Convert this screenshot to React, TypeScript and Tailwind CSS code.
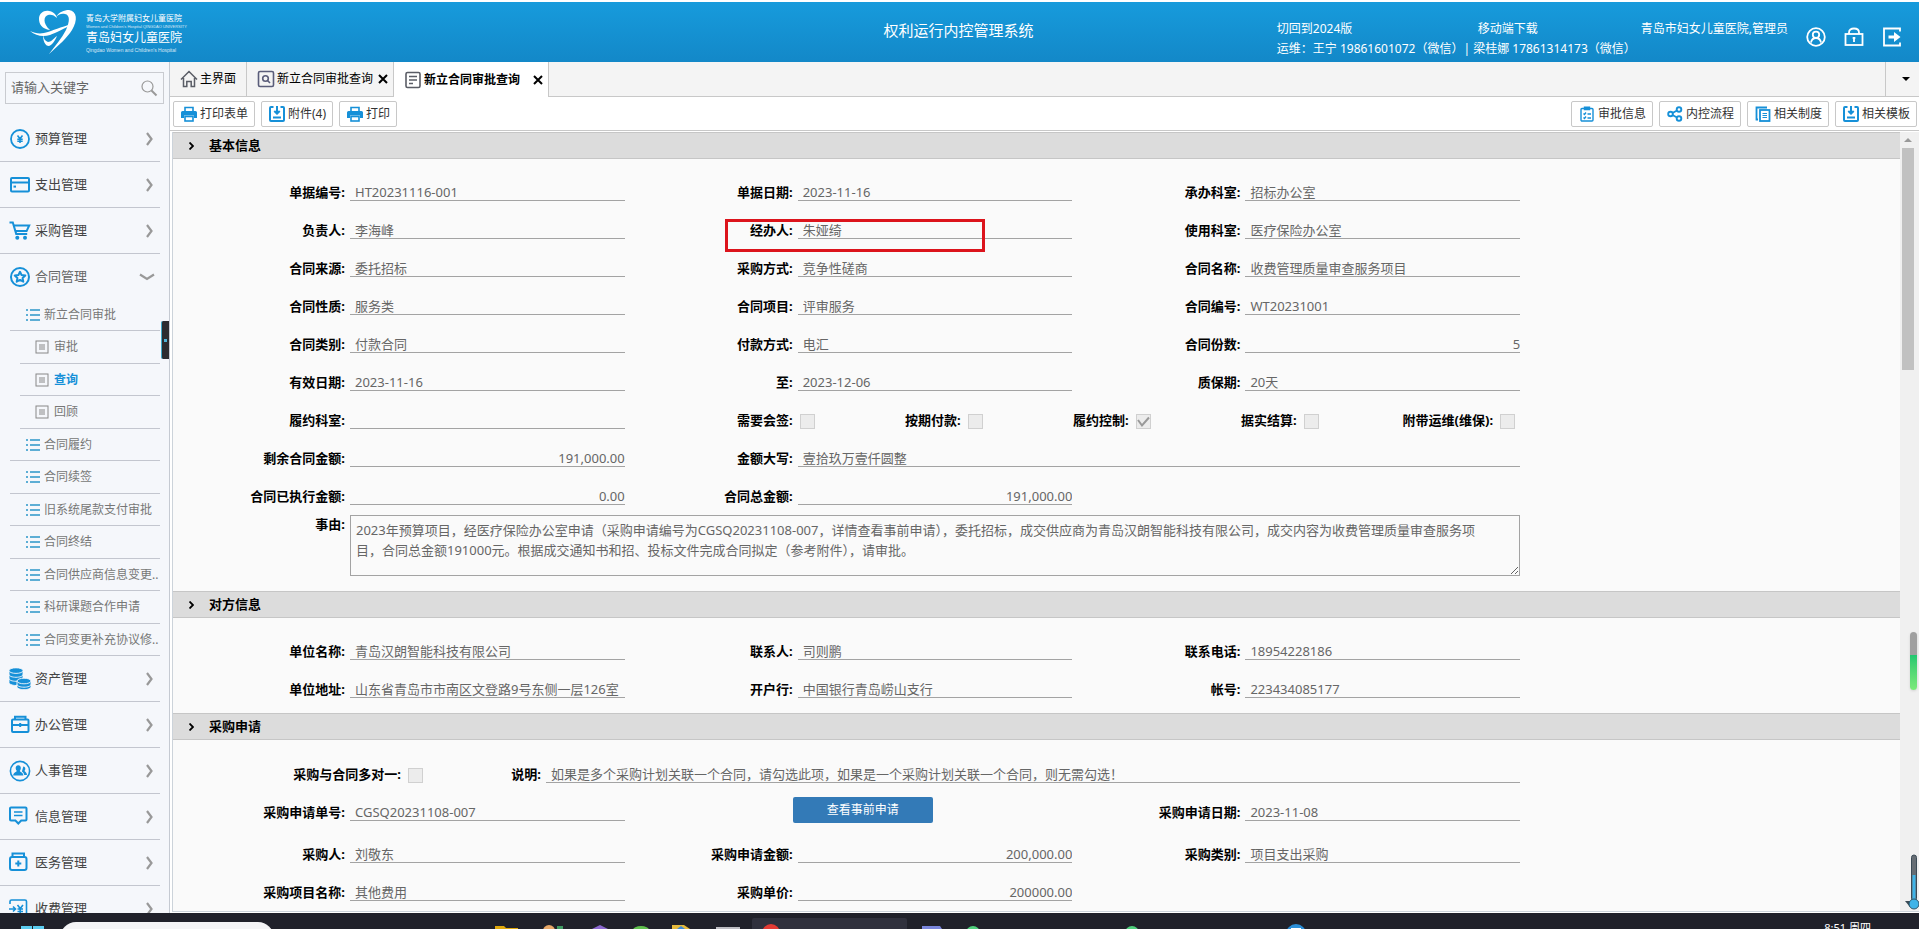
import { useState, type ReactNode } from 'react';

/* ---------- icons ---------- */

const BLUE = '#1690d8';

const menuIcons: Record<string, ReactNode> = {
  budget: (
    <g fill="none" stroke={BLUE} strokeWidth="1.8">
      <circle cx="11" cy="11" r="9" />
      <path d="M8.5 7.5l2.5 3.2 2.5-3.2M11 10.5v4.5M8.3 11.2h5.4M8.3 13.3h5.4" strokeWidth="1.6" />
    </g>
  ),
  expense: (
    <g fill="none" stroke={BLUE} strokeWidth="2">
      <rect x="2" y="4" width="18" height="13.5" rx="1" />
      <path d="M2 8.5h18" />
      <path d="M4.5 12.6h2.5" />
    </g>
  ),
  purchase: (
    <g fill="none" stroke={BLUE} strokeWidth="2">
      <path d="M0.5 2.5h3.3l3.4 11.4h11" />
      <path d="M4.8 5.5h15.4l-2.6 5.6H6.4" />
      <circle cx="8.3" cy="17.8" r="2" fill={BLUE} stroke="none" />
      <circle cx="16" cy="17.8" r="2" fill={BLUE} stroke="none" />
    </g>
  ),
  contract: (
    <g fill="none" stroke={BLUE} strokeWidth="2">
      <circle cx="11" cy="11" r="9" />
      <path d="M11 5.8l1.6 3.3 3.7.5-2.7 2.5.7 3.6-3.3-1.8-3.3 1.8.7-3.6-2.7-2.5 3.7-.5z" strokeLinejoin="round" />
    </g>
  ),
  asset: (
    <g fill={BLUE} stroke="#f5f7fb" strokeWidth="0.9">
      <path d="M0 2.5v12c0 1.6 3.2 3 7 3s7-1.4 7-3v-12z" />
      <ellipse cx="7" cy="2.6" rx="7" ry="2.8" />
      <path d="M0 6.5c0 1.6 3.2 2.8 7 2.8s7-1.2 7-2.8M0 10.5c0 1.6 3.2 2.8 7 2.8s7-1.2 7-2.8" fill="none" />
      <path d="M8 13.2v5.6c0 1.6 3.2 2.9 7 2.9s7-1.3 7-2.9v-5.6z" />
      <ellipse cx="15" cy="13" rx="7" ry="2.8" />
      <path d="M8 16.4c0 1.6 3.2 2.8 7 2.8s7-1.2 7-2.8" fill="none" />
    </g>
  ),
  office: (
    <g fill="none" stroke={BLUE} strokeWidth="2">
      <rect x="3" y="5.5" width="16.5" height="12.5" rx="1" />
      <path d="M6 5.5V2.8h10.5v2.7M3 11h16.5M11.2 9v4" />
    </g>
  ),
  staff: (
    <g>
      <circle cx="11" cy="11" r="9.6" fill="none" stroke={BLUE} strokeWidth="1.6" />
      <path d="M9.2 5.2c1.9 0 2.8 1.3 2.6 3.2-.1 1.2-.7 1.9-1 2.4.2 1.6 3.6 1.6 3.6 4.7H4.2c0-3.1 3.4-3.1 3.6-4.7-.4-.5-1-1.2-1.1-2.4-.2-1.9.7-3.2 2.5-3.2z" fill={BLUE} />
      <path d="M14.3 6.5c1.4 0 2.1 1 2 2.4-.1.9-.5 1.5-.8 1.900.2 1.200 2.500 1.400 2.500 4.200h-2.800c-.1-2-1.500-3-2.300-3.500z" fill={BLUE} />
    </g>
  ),
  info: (
    <g fill="none" stroke={BLUE} strokeWidth="2">
      <path d="M2 1.5h14.5a1 1 0 0 1 1 1v11a1 1 0 0 1-1 1h-4.300L9.300 17.500l-2.900-3H2a1 1 0 0 1-1-1v-11a1 1 0 0 1 1-1z" />
      <path d="M5 6h8.500M5 9.500h8.500" strokeWidth="1.300" />
    </g>
  ),
  medical: (
    <g fill="none" stroke={BLUE} strokeWidth="2">
      <rect x="1" y="5" width="16.5" height="13" rx="2" />
      <path d="M3.500 4.500V1.500h11.500v3M9.300 8.500v6M6.300 11.500h6" />
    </g>
  ),
  charge: (
    <g fill="none" stroke={BLUE} strokeWidth="1.6">
      <path d="M1 6V3.500a1.500 1.500 0 0 1 1.500-1.500H16a1.500 1.500 0 0 1 1.500 1.500v15H1v-3M0 11h6M4 8.500l2.500 2.500L4 13.500" />
      <path d="M8.500 7l2.700 3.500L14 7M11.200 10.500V16M8.500 11h5.500M8.500 13.500h5.500" />
    </g>
  ),
};

const toolIcons: Record<string, ReactNode> = {
  print: (
    <g>
      <path d="M4 5V1.500h8V5" fill="none" stroke={BLUE} strokeWidth="1.600" />
      <path d="M1.500 5h13a1.500 1.500 0 0 1 1.500 1.500v5.500h-3V9.500H3V12H0V6.500a1.500 1.500 0 0 1 1.500-1.500z" fill={BLUE} />
      <rect x="4" y="10.500" width="8" height="4.500" fill="none" stroke={BLUE} strokeWidth="1.600" />
    </g>
  ),
  save: (
    <g fill="none" stroke={BLUE} strokeWidth="2">
      <path d="M4.500 1H2a1 1 0 0 0-1 1v12a1 1 0 0 0 1 1h12a1 1 0 0 0 1-1V2a1 1 0 0 0-1-1h-2.500" />
      <path d="M8 0v7.500M5.300 5L8 7.700 10.700 5M4 11.500h8" />
    </g>
  ),
  audit: (
    <g fill="none" stroke={BLUE} strokeWidth="1.400">
      <rect x="2" y="2.500" width="12" height="12.500" rx="1" />
      <path d="M5.500 3.500V1.200h5v2.300zM4.500 7.500l1 1 1.500-2M4.500 11.500l1 1 1.500-2M8.500 8H12M8.500 12H12" />
    </g>
  ),
  share: (
    <g fill="none" stroke={BLUE} strokeWidth="1.900">
      <circle cx="3.500" cy="8" r="2.300" />
      <circle cx="12" cy="3.500" r="2.300" />
      <circle cx="12" cy="12.500" r="2.300" />
      <path d="M5.500 7l4.500-2.500M5.500 9l4.500 2.500" />
    </g>
  ),
  rules: (
    <g fill="none" stroke={BLUE} strokeWidth="1.800">
      <path d="M3 13.500H1.500V1.500H12" />
      <rect x="5" y="4" width="9.500" height="11" />
      <path d="M7.500 7.500h4.500M7.500 9.500h4.500M7.500 11.500h4.500" strokeWidth="1.200" />
    </g>
  ),
};

/* ---------- data ---------- */

const topMenu = [
  { icon: 'budget', label: '预算管理' },
  { icon: 'expense', label: '支出管理' },
  { icon: 'purchase', label: '采购管理' },
];

const bottomMenu = [
  { icon: 'asset', label: '资产管理' },
  { icon: 'office', label: '办公管理' },
  { icon: 'staff', label: '人事管理' },
  { icon: 'info', label: '信息管理' },
  { icon: 'medical', label: '医务管理' },
  { icon: 'charge', label: '收费管理' },
];

const subMenu = [
  { label: '新立合同审批' },
  { label: '审批', leaf: true },
  { label: '查询', leaf: true, active: true },
  { label: '回顾', leaf: true },
  { label: '合同履约' },
  { label: '合同续签' },
  { label: '旧系统尾款支付审批' },
  { label: '合同终结' },
  { label: '合同供应商信息变更..' },
  { label: '科研课题合作申请' },
  { label: '合同变更补充协议修..' },
];

const reason =
  '2023年预算项目，经医疗保险办公室申请（采购申请编号为CGSQ20231108-007，详情查看事前申请），委托招标，成交供应商为青岛汉朗智能科技有限公司，成交内容为收费管理质量审查服务项目，合同总金额191000元。根据成交通知书和招、投标文件完成合同拟定（参考附件），请审批。';

/* ---------- sidebar ---------- */

function MenuItem({ icon, label, open }: { icon: string; label: string; open?: boolean }) {
  return (
    <button className={`flex w-[160px] shrink-0 items-center pl-[9px] text-left text-[13px] ${open ? 'h-[45px] text-[#666]' : 'h-[46px] border-b border-[#c3c6cf] text-[#444]'}`}>
      <svg className="h-[22px] w-[22px]" viewBox="0 0 22 22">{menuIcons[icon]}</svg>
      <span className="ml-1 flex-1">{label}</span>
      {open ? (
        <svg className="mr-[5px] h-4 w-4" viewBox="0 0 16 16" fill="none" stroke="#999" strokeWidth="2.200"><path d="M1 5.500l7 4.500 7-4.500" /></svg>
      ) : (
        <svg className="mr-[3px] h-4 w-4" viewBox="0 0 16 16" fill="none" stroke="#999" strokeWidth="2.200"><path d="M6 2l4.500 6L6 14" /></svg>
      )}
    </button>
  );
}

function Sidebar() {
  return (
    <aside className="relative flex w-[170px] shrink-0 flex-col overflow-hidden border-r border-[#c5cad2] bg-[#f5f7fb]">
      <label className="mt-2.5 mr-[5px] mb-3 ml-[5px] flex h-8 shrink-0 items-center border border-[#c9cbd0] px-[5px]">
        <input aria-label="菜单搜索" placeholder="请输入关键字" className="w-full min-w-0 bg-transparent text-[13px] outline-none placeholder:text-[#666]" />
        <svg className="h-[18px] w-[18px] shrink-0" viewBox="0 0 18 18" fill="none" stroke="#999" strokeWidth="1.200">
          <circle cx="7.500" cy="7.500" r="5.500" />
          <path d="M11.500 11.500l5 5" strokeWidth="2" />
        </svg>
      </label>
      <nav className="flex flex-col">
        {topMenu.map((m) => <MenuItem key={m.label} {...m} />)}
        <MenuItem icon="contract" label="合同管理" open />
        <ul className="w-[160px] text-[12px]">
          {subMenu.map((s) => (
            <li key={s.label} className={`border-b border-[#c3c6cf] odd:h-8 even:h-[33px] ${s.leaf ? 'ml-5' : 'ml-2.5'}`}>
              <a href="#" className={`flex h-full items-center whitespace-nowrap ${s.leaf ? 'pl-[15px]' : 'pl-4'} ${s.active ? 'font-bold text-[#1690d8]' : 'text-[#777]'}`}>
                {s.leaf ? (
                  <svg className="mr-[5px] h-3.5 w-3.5 shrink-0" viewBox="0 0 14 14" fill="none" stroke="#888">
                    <rect x="1" y="1" width="12" height="12" />
                    <path d="M4 5h6M4 7h6M4 9h6" />
                  </svg>
                ) : (
                  <svg className="mr-1 h-3.5 w-3.5 shrink-0" viewBox="0 0 14 14" stroke="#2b96c9" strokeWidth="1.500">
                    <path d="M0 2h2M4 2h10M0 7h2M4 7h10M0 12h2M4 12h10" />
                  </svg>
                )}
                {s.label}
              </a>
            </li>
          ))}
        </ul>
        {bottomMenu.map((m) => <MenuItem key={m.label} {...m} />)}
      </nav>
      <button aria-label="收起菜单" className="absolute top-[259px] right-0 flex h-[38px] w-2 items-center justify-center rounded-l-xs border-l border-[#3fa9c9] bg-[#2c2c30]">
        <span className="h-[3px] w-[3px] bg-[#4fb4d8]" />
      </button>
    </aside>
  );
}

/* ---------- header ---------- */

function Header() {
  return (
    <header className="mt-0.5 flex h-[60px] shrink-0 items-start bg-linear-to-b from-[#179bdc] to-[#1388c8] text-[12px] leading-5 text-white">
      <div className="flex flex-1 pt-1.5 pl-[30px]">
        <svg className="h-[46px] w-[52px]" viewBox="0 0 52 46" fill="#fff">
          <path d="M20 22C12 21 9 16 9 11 9 5 14 2 19 3c4 .5 7 3 8 7-3-3-6-4-9-3-4 1-6 8 2 15z" />
          <path d="M26 9c3-5 8-7 13-7 8 1 9 10 3 20-5 8-13 15-23 24 6-8 13-16 17-24 4-9 4-15-1-16-4-1-7 1-9 3z" />
          <path d="M0 23c6 3 12 3 18 1 8-3 16-6 28-9-12 5-20 10-26 12-7 2-14 1-20-4z" />
          <path d="M13 27c1 4 2 6 5 7 3 0 5-3 9-6-2 5-5 9-8 10-4 0-6-5-6-11z" />
        </svg>
        <div className="ml-1 flex flex-col whitespace-nowrap">
          <span className="pt-1 text-[8px] leading-3">青岛大学附属妇女儿童医院</span>
          <span className="font-['Liberation_Sans',sans-serif] text-[4px] leading-[5px] opacity-80">Women and Children's Hospital QINGDAO UNIVERSITY</span>
          <span className="text-[12px] leading-[18px]">青岛妇女儿童医院</span>
          <span className="font-['Liberation_Sans',sans-serif] text-[5px] leading-[6px] opacity-80">Qingdao Women and Children's Hospital</span>
        </div>
      </div>
      <h1 className="pt-[18px] pr-8 text-[15px]">权利运行内控管理系统</h1>
      <div className="flex flex-1 justify-end">
        <div className="w-[364px] shrink-0 pt-[17px] whitespace-nowrap">
          <div className="flex">
            <a href="#" className="w-[201px]">切回到2024版</a>
            <a href="#">移动端下载</a>
          </div>
          <p>运维：王宁 19861601072（微信）| 梁桂娜 17861314173（微信）</p>
        </div>
        <span className="pt-[17px] whitespace-nowrap">青岛市妇女儿童医院,管理员</span>
        <div className="flex gap-[18px] pt-[25px] pr-[17px] pl-[18px]">
          <button aria-label="用户" className="h-5">
            <svg className="block h-5 w-5" viewBox="0 0 20 20" fill="none" stroke="#fff" strokeWidth="1.800">
              <circle cx="10" cy="10" r="8.800" />
              <circle cx="10" cy="7.800" r="3.200" />
              <path d="M5 15.500c.6-3 2.500-4.500 5-4.500s4.400 1.500 5 4.500" />
            </svg>
          </button>
          <button aria-label="锁定" className="h-5">
            <svg className="block h-5 w-5" viewBox="0 0 20 20" fill="none" stroke="#fff" strokeWidth="1.800">
              <rect x="1.500" y="7" width="17" height="11" />
              <path d="M5 7V5.500C5 3 7 1.500 10 1.500s5 1.500 5 4V7M10 10.500v4.500M8.700 11h2.600" />
            </svg>
          </button>
          <button aria-label="退出" className="h-5">
            <svg className="block h-5 w-5" viewBox="0 0 20 20" fill="none" stroke="#fff" strokeWidth="1.800">
              <path d="M18 4.500V1.500H2v17h16v-3" />
              <path d="M6.500 8.500H12V5l6.500 5L12 15v-3.500H6.500z" fill="#fff" stroke="none" />
            </svg>
          </button>
        </div>
      </div>
    </header>
  );
}

/* ---------- tabs and toolbar ---------- */

function Tabs() {
  return (
    <div className="flex h-[35px] shrink-0 border-b border-[#c8c8c8] bg-[#f4f4f4] text-[12px] text-black">
      <button className="flex w-[77px] items-center gap-0.5 border-r border-[#c8c8c8] pl-2.5">
        <svg className="h-[18px] w-[18px]" viewBox="0 0 18 18" fill="none" stroke="#5a5d66" strokeWidth="1.500">
          <path d="M1 9.500L9 1.500l8 8M3.500 8v8.500h3.300v-5h4.400v5h3.300V8" />
        </svg>
        主界面
      </button>
      <button className="flex w-[147px] items-center gap-0.5 border-r border-[#c8c8c8] pl-2.5">
        <svg className="h-[18px] w-[18px]" viewBox="0 0 18 18" fill="none" stroke="#5a5d7a" strokeWidth="1.600">
          <rect x="1.500" y="1.500" width="15" height="15" rx="1.500" />
          <circle cx="8.500" cy="8.500" r="2.800" />
          <path d="M10.500 10.500l2.500 2.500" />
        </svg>
        新立合同审批查询
        <Cross />
      </button>
      <button className="-mb-px flex w-[155px] items-center gap-0.5 border-r border-[#c8c8c8] bg-white pr-[5px] pl-2.5 font-bold">
        <svg className="h-[18px] w-[18px]" viewBox="0 0 18 18" fill="none" stroke="#5a5d66" strokeWidth="1.600">
          <rect x="2" y="1.500" width="14" height="15" rx="1.500" />
          <path d="M5 5.500h8M5 9h8M5 12.500h4" />
        </svg>
        <span className="flex-1 text-left">新立合同审批查询</span>
        <Cross />
      </button>
      <button aria-label="更多标签" className="ml-auto flex w-[34px] items-center justify-center border-l border-[#c8c8c8] pl-1.5">
        <svg className="h-1 w-2" viewBox="0 0 8 4"><path d="M0 0h8L4 4z" /></svg>
      </button>
    </div>
  );
}

function Cross() {
  return (
    <svg className="ml-[3px] h-2.5 w-2.5 shrink-0" viewBox="0 0 10 10" stroke="#000" strokeWidth="2"><path d="M1 1l8 8M9 1L1 9" /></svg>
  );
}

function ToolButton({ icon, label }: { icon: string; label: string }) {
  return (
    <button className="flex h-[26px] items-center gap-[3px] rounded-xs border border-[#c8c8c8] bg-white pr-1.5 pl-[7px] text-[12px] whitespace-nowrap text-[#333]">
      <svg className="h-4 w-4" viewBox="0 0 16 16">{toolIcons[icon]}</svg>
      {label}
    </button>
  );
}

/* ---------- form ---------- */

type FieldProps = { label: string; value?: string; right?: boolean; className?: string; children?: ReactNode };

function Field({ label, value = '', right, className = '', children }: FieldProps) {
  return (
    <div className={`relative flex h-[38px] items-end gap-[5px] ${className}`}>
      <label htmlFor={label} className="w-[168px] shrink-0 text-right font-bold text-black">{label}:</label>
      <input id={label} readOnly value={value} className={`h-[18px] min-w-0 flex-1 border-b border-[#a3a3a3] bg-transparent pl-[5px] outline-none ${right ? 'text-right' : ''}`} />
      {children}
    </div>
  );
}

function Check({ label, checked, className = '' }: { label: string; checked?: boolean; className?: string }) {
  const [on, setOn] = useState(!!checked);
  return (
    <label className={`flex items-end justify-end gap-[7px] font-bold text-black ${className}`}>
      {label}:
      <span className="relative h-[15px] w-[15px]">
        <input type="checkbox" checked={on} onChange={() => setOn(!on)} className="block h-[15px] w-[15px] appearance-none border border-[#d0d0d0] bg-[#ececec]" />
        {on && (
          <svg className="pointer-events-none absolute inset-0" viewBox="0 0 15 15" fill="none" stroke="#999" strokeWidth="2"><path d="M2 6l4 5.500L13 3.500" /></svg>
        )}
      </span>
    </label>
  );
}

function Section({ title, children }: { title: string; children: ReactNode }) {
  return (
    <section>
      <h2 className="flex h-[27px] items-center border-y border-[#c6c6c6] bg-[#dcdcdc] pl-4 text-[13px] font-bold text-black">
        <svg className="mr-[15px] h-2 w-[5px]" viewBox="0 0 5 8" fill="none" stroke="#000" strokeWidth="1.800"><path d="M0.500 0.500L4 4 0.500 7.500" /></svg>
        {title}
      </h2>
      <div className="mr-[22%] ml-1 grid grid-cols-3 pt-1 pb-[15px] text-[13px] leading-[18px] text-[#666]">{children}</div>
    </section>
  );
}

function ContractForm() {
  return (
    <div className="min-w-0 flex-1">
      <Section title="基本信息">
        <Field label="单据编号" value="HT20231116-001" />
        <Field label="单据日期" value="2023-11-16" />
        <Field label="承办科室" value="招标办公室" />
        <Field label="负责人" value="李海峰" />
        <Field label="经办人" value="朱娅绮">
          <span className="pointer-events-none absolute top-[18px] left-[100px] h-[33px] w-[260px] border-3 border-[#dc141c]" />
        </Field>
        <Field label="使用科室" value="医疗保险办公室" />
        <Field label="合同来源" value="委托招标" />
        <Field label="采购方式" value="竞争性磋商" />
        <Field label="合同名称" value="收费管理质量审查服务项目" />
        <Field label="合同性质" value="服务类" />
        <Field label="合同项目" value="评审服务" />
        <Field label="合同编号" value="WT20231001" />
        <Field label="合同类别" value="付款合同" />
        <Field label="付款方式" value="电汇" />
        <Field label="合同份数" value="5" right />
        <Field label="有效日期" value="2023-11-16" />
        <Field label="至" value="2023-12-06" />
        <Field label="质保期" value="20天" />
        <Field label="履约科室" />
        <div className="col-span-2 flex">
          <Check label="需要会签" className="w-[190px]" />
          <Check label="按期付款" className="w-[168px]" />
          <Check label="履约控制" className="w-[168px]" checked />
          <Check label="据实结算" className="w-[168px]" />
          <Check label="附带运维(维保)" className="flex-1 pr-[5px]" />
        </div>
        <Field label="剩余合同金额" value="191,000.00" right />
        <Field label="金额大写" value="壹拾玖万壹仟圆整" className="col-span-2" />
        <Field label="合同已执行金额" value="0.00" right />
        <Field label="合同总金额" value="191,000.00" right />
        <div className="col-span-3 flex gap-[5px] pt-2.5">
          <label htmlFor="reason" className="w-[168px] shrink-0 text-right font-bold text-black">事由:</label>
          <textarea id="reason" readOnly value={reason} className="h-[61px] flex-1 border border-[#a3a3a3] py-1 pr-6 pl-[5px] leading-5 outline-none" />
        </div>
      </Section>

      <Section title="对方信息">
        <Field label="单位名称" value="青岛汉朗智能科技有限公司" />
        <Field label="联系人" value="司则鹏" />
        <Field label="联系电话" value="18954228186" />
        <Field label="单位地址" value="山东省青岛市市南区文登路9号东侧一层126室" />
        <Field label="开户行" value="中国银行青岛崂山支行" />
        <Field label="帐号" value="223434085177" />
      </Section>

      <Section title="采购申请">
        <div className="col-span-3 mt-px flex h-[38px] items-end">
          <Check label="采购与合同多对一" className="w-[246px] shrink-0" />
          <label htmlFor="note" className="w-[118px] shrink-0 text-right font-bold text-black">说明:</label>
          <input id="note" readOnly value="如果是多个采购计划关联一个合同，请勾选此项，如果是一个采购计划关联一个合同，则无需勾选！" className="ml-[5px] h-[18px] min-w-0 flex-1 border-b border-[#a3a3a3] bg-transparent pl-[5px] outline-none" />
        </div>
        <Field label="采购申请单号" value="CGSQ20231108-007" />
        <div className="flex items-start pt-3.5 pl-[168px]">
          <button className="-mb-1 h-[26px] w-[140px] rounded-xs bg-[#337ab7] text-[12px] text-white">查看事前申请</button>
        </div>
        <Field label="采购申请日期" value="2023-11-08" />
        <Field label="采购人" value="刘敬东" className="mt-1" />
        <Field label="采购申请金额" value="200,000.00" right className="mt-1" />
        <Field label="采购类别" value="项目支出采购" className="mt-1" />
        <Field label="采购项目名称" value="其他费用" />
        <Field label="采购单价" value="200000.00" right />
      </Section>
    </div>
  );
}

function Scrollbar() {
  return (
    <div className="flex w-[19px] shrink-0 flex-col items-center bg-[#f0f0f0] pr-1">
      <svg className="my-1.5 h-1 w-2 shrink-0" viewBox="0 0 8 4" fill="#999"><path d="M0 4h8L4 0z" /></svg>
      <div className="h-[222px] w-3 shrink-0 bg-[#c1c1c1]" />
    </div>
  );
}

/* ---------- desktop strip ---------- */

function Taskbar() {
  return (
    <footer className="relative h-4 shrink-0 overflow-hidden bg-[#20212a]">
      <svg className="absolute top-0 left-0 h-4 w-[1400px]" viewBox="0 0 1400 16">
        <path d="M21 13h11v3H21zM33 13h11v3H33z" fill="#5ccdf0" />
        <path d="M752 7a2 2 0 0 1 2-2h151a2 2 0 0 1 2 2v9H752z" fill="#30313d" />
        <path d="M495 13h9l2 2h12v1h-23z" fill="#e0a90c" />
        <circle cx="549" cy="18" r="6" fill="#e8a868" />
        <path d="M557 13h6v3h-6z" fill="#3f9a62" />
        <path d="M592 16l8-4 8 4z" fill="#8b68cf" />
        <ellipse cx="641" cy="17" rx="8" ry="4" fill="#5fc04d" />
        <path d="M672 12h12l6 4h-18z" fill="#e5b93c" />
        <path d="M677 16l4-3 4 3z" fill="#3b8ad8" />
        <path d="M716 14h24v2h-24z" fill="#bdbdc2" />
        <circle cx="771" cy="20" r="9" fill="#e33b34" />
        <path d="M922 13h18l2 3h-20z" fill="#7a86dc" />
        <circle cx="973" cy="20" r="7" fill="#4fd07c" />
        <circle cx="1132" cy="20" r="7" fill="#4fd07c" />
        <circle cx="1296" cy="21" r="10" fill="#2b8fd8" />
        <path d="M1291 15h10v1h-10z" fill="#fff" />
      </svg>
      <div className="absolute top-[9px] left-[60px] h-8 w-[214px] rounded-full bg-[#f4f4f6]" />
      <span className="absolute top-2 right-12 text-[11px] leading-[14px] text-white">8:51 周四</span>
    </footer>
  );
}

export default function App() {
  return (
    <div className="relative flex h-screen flex-col overflow-hidden bg-white font-['Noto_Sans','Noto_Sans_CJK_SC',sans-serif]">
      <Header />
      <div className="flex min-h-0 flex-1">
        <Sidebar />
        <main className="flex min-w-0 flex-1 flex-col">
          <Tabs />
          <div className="flex h-[34px] shrink-0 items-center gap-1.5 border-b border-[#c8c8c8] pt-px pr-0.5 pl-[3px]">
            <ToolButton icon="print" label="打印表单" />
            <ToolButton icon="save" label="附件(4)" />
            <ToolButton icon="print" label="打印" />
            <div className="ml-auto flex gap-1.5">
              <ToolButton icon="audit" label="审批信息" />
              <ToolButton icon="share" label="内控流程" />
              <ToolButton icon="rules" label="相关制度" />
              <ToolButton icon="save" label="相关模板" />
            </div>
          </div>
          <div className="mt-px mb-px ml-0.5 flex min-h-0 flex-1 overflow-hidden border-b border-l border-[#ccd3da] bg-[#fafafa]">
            <ContractForm />
            <Scrollbar />
          </div>
        </main>
      </div>
      <Taskbar />
      <div className="absolute right-0.5 bottom-[239px] h-[58px] w-[7px] rounded-full bg-linear-to-b from-[#a0a0a0] from-40% via-[#1fc870] via-40% to-[#7bea7b] shadow" />
      <svg className="absolute right-0 bottom-[19px] h-14 w-3.5" viewBox="0 0 14 56">
        <rect x="6.500" y="1" width="5" height="46" rx="2.500" fill="#666d74" stroke="#3b4a55" />
        <path d="M9 21v28" stroke="#3fb4e8" strokeWidth="3" />
        <path d="M0 47l5 6V47z" fill="#3b4a55" />
        <circle cx="9" cy="50" r="5" fill="#3fb4e8" stroke="#2d5568" />
      </svg>
    </div>
  );
}
